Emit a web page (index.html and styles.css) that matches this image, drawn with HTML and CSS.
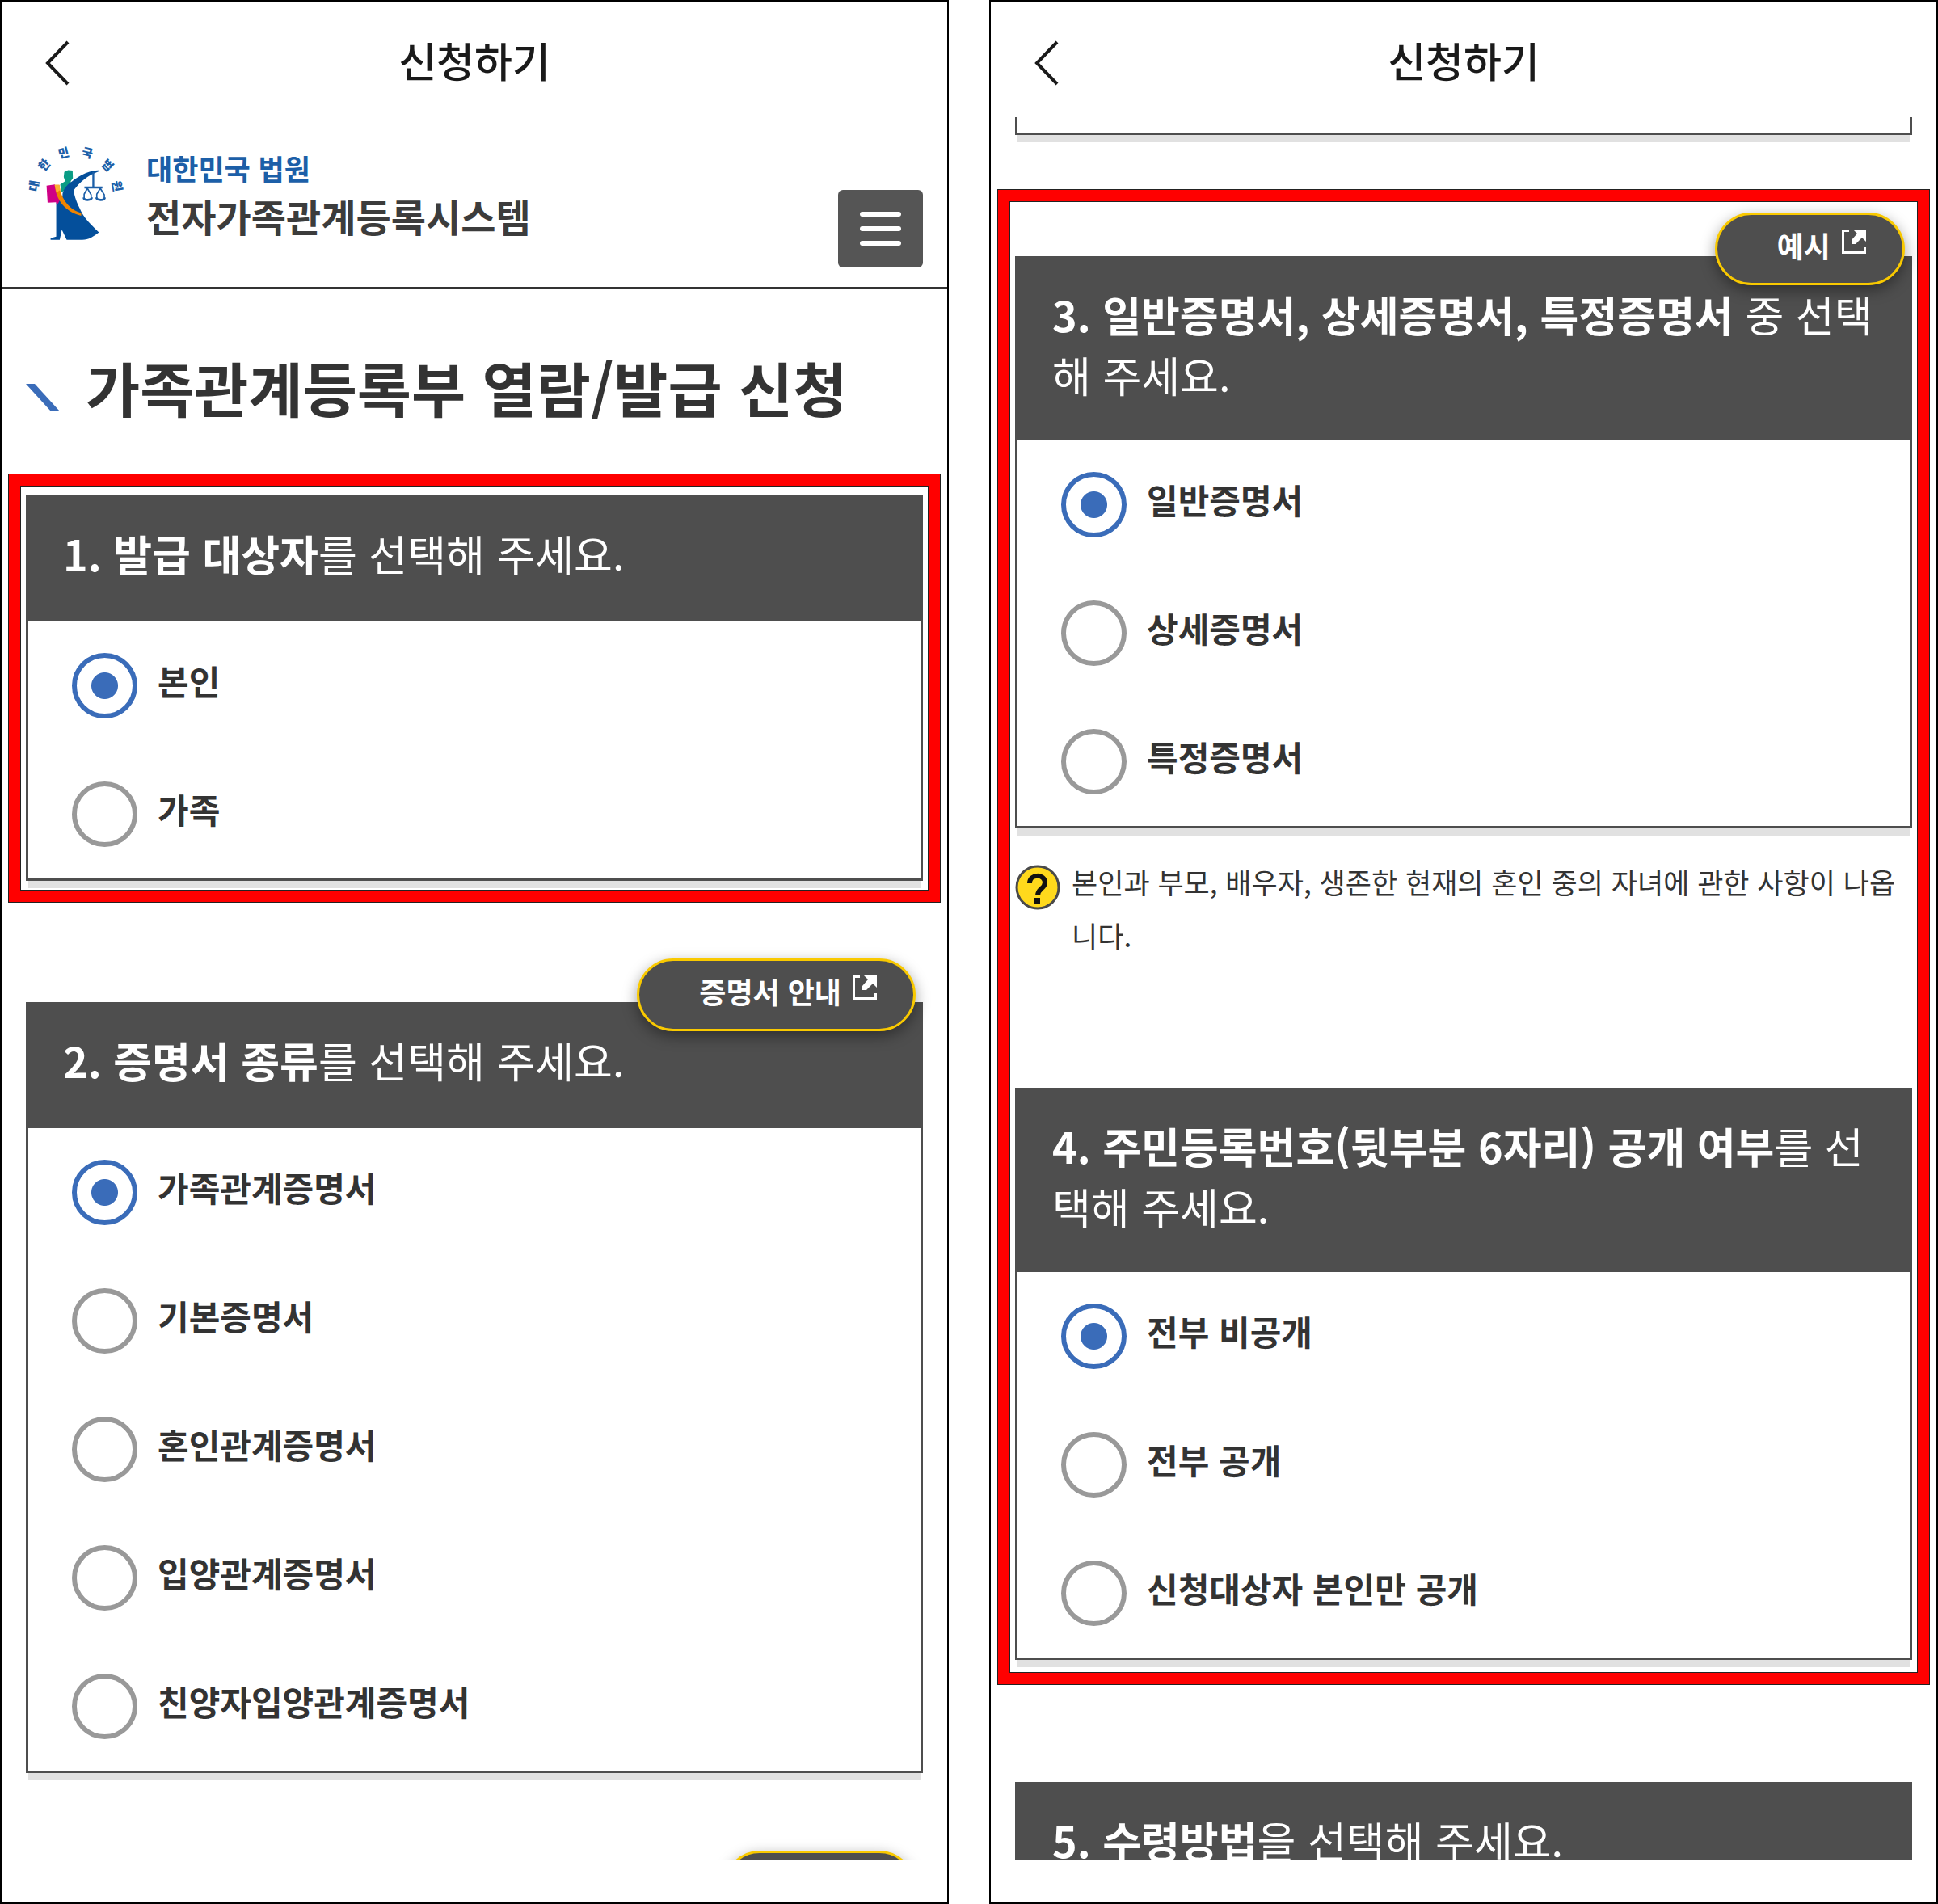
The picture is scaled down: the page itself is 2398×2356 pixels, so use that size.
FILE: index.html
```html
<!DOCTYPE html>
<html lang="ko">

<head>
  <meta charset="UTF-8">
  <meta name="viewport" content="width=device-width, initial-scale=1.0">
  <title>가족관계등록부 열람/발급 신청</title>
  <link rel="stylesheet" href="styles.css">
</head>

<body>

  <svg width="0" height="0" class="defs" aria-hidden="true">
    <symbol id="icon-back" viewBox="0 0 32 56">
      <path d="M30 2 L5 28 L30 54" fill="none" stroke="#1a1a1a" stroke-width="4"/>
    </symbol>
    <symbol id="icon-open" viewBox="0 0 30 30">
      <path d="M9 1.5H1.5V28.5H28.5V22" fill="none" stroke="#fff" stroke-width="3"/>
      <path d="M14 0H30V15L25 10L17 18H12V13L19 5Z" fill="#fff"/>
    </symbol>
  </svg>

  <main class="screens">

    <section class="screen">
      <header class="topbar">
        <button class="back" aria-label="뒤로"><svg><use href="#icon-back"/></svg></button>
        <h1>신청하기</h1>
      </header>

      <div class="content">
        <div class="site-head">
          <a href="#" class="logo">
            <svg class="emblem" viewBox="40 54 370 360">
              <g fill="#1c5fa8" class="emblem-text">
                <text transform="translate(67 206) rotate(-80)">대</text>
                <text transform="translate(106 127) rotate(-50)">한</text>
                <text transform="translate(180 81) rotate(-14)">민</text>
                <text transform="translate(270 81) rotate(14)">국</text>
                <text transform="translate(346 128) rotate(45)">법</text>
                <text transform="translate(383 207) rotate(80)">원</text>
              </g>
              <path d="M183 155L197 148L214 150L215 178L207 190L208 205L172 232L168 202L186 190L181 174Z" fill="#0a9c85"/>
              <path d="M314 149C270 146 226 178 204 196C184 212 174 232 177 246L153 270V396L132 402V408H166L174 370L192 408H250C275 407 290 397 312 380C285 355 254 325 240 290C228 265 218 240 219 222C240 195 268 168 314 152Z" fill="#044f9b"/>
              <path d="M117 206L148 202L166 262L156 278L152 268L121 269Z" fill="#cf0086"/>
              <path d="M147 203H165C168 250 200 296 246 308V318C196 306 154 270 147 203Z" fill="#f08400"/>
              <path d="M147 203H165L168 222L154 232Z" fill="#fbb034"/>
              <g fill="none" stroke="#1c5fa8">
                <path d="M291 155V213M258 213H325" stroke-width="7"/>
                <path d="M269 216L257 238V252M269 216L283 240V252M317 216L304 238V252M317 216L332 240V252" stroke-width="5"/>
                <path d="M255 250C256 262 284 262 286 250M302 250C304 262 333 262 334 250" stroke-width="8"/>
              </g>
            </svg>
            <span class="logo-text">
              <span class="logo-court">대한민국 법원</span>
              <span class="logo-system">전자가족관계등록시스템</span>
            </span>
          </a>
          <button class="menu" aria-label="메뉴">
            <span></span>
            <span></span>
            <span></span>
          </button>
        </div>

        <h2 class="page-title">
          <svg viewBox="0 0 42 34"><path d="M0 0H11L42 34H31Z" fill="#3a6cb9"/></svg>
          가족관계등록부 열람/발급 신청
        </h2>

        <div class="highlight">
          <fieldset class="card">
            <div class="card-title"><p><strong>1. 발급 대상자</strong>를 선택해 주세요.</p></div>
            <div class="options">
              <label class="option"><input type="radio" name="target" checked><span>본인</span></label>
              <label class="option"><input type="radio" name="target"><span>가족</span></label>
            </div>
          </fieldset>
        </div>

        <div class="block block-type">
          <fieldset class="card">
            <button class="pill">증명서 안내<svg><use href="#icon-open"/></svg></button>
            <div class="card-title"><p><strong>2. 증명서 종류</strong>를 선택해 주세요.</p></div>
            <div class="options">
              <label class="option"><input type="radio" name="cert" checked><span>가족관계증명서</span></label>
              <label class="option"><input type="radio" name="cert"><span>기본증명서</span></label>
              <label class="option"><input type="radio" name="cert"><span>혼인관계증명서</span></label>
              <label class="option"><input type="radio" name="cert"><span>입양관계증명서</span></label>
              <label class="option"><input type="radio" name="cert"><span>친양자입양관계증명서</span></label>
            </div>
          </fieldset>
        </div>

        <div class="block block-next">
          <div class="card">
            <button class="pill pill-short" aria-label="예시"></button>
          </div>
        </div>
      </div>
    </section>

    <section class="screen">
      <header class="topbar">
        <button class="back" aria-label="뒤로"><svg><use href="#icon-back"/></svg></button>
        <h1>신청하기</h1>
      </header>

      <div class="content">
        <div class="block">
          <div class="card">
            <div class="options card-end"></div>
          </div>
        </div>

        <div class="highlight highlight-tall">
          <fieldset class="card">
            <button class="pill">예시<svg><use href="#icon-open"/></svg></button>
            <div class="card-title"><p><strong>3. 일반증명서, 상세증명서, 특정증명서</strong> 중 선택해 주세요.</p></div>
            <div class="options">
              <label class="option"><input type="radio" name="kind" checked><span>일반증명서</span></label>
              <label class="option"><input type="radio" name="kind"><span>상세증명서</span></label>
              <label class="option"><input type="radio" name="kind"><span>특정증명서</span></label>
            </div>
          </fieldset>

          <div class="help">
            <svg class="help-icon" viewBox="0 0 57 57">
              <circle cx="28" cy="28" r="26" fill="#ffd91c" stroke="#4a4a4a" stroke-width="3"/>
              <path d="M18 23C18 11 37 11 37 22C37 30 28 29 28 38" fill="none" stroke="#111" stroke-width="6"/>
              <rect x="24" y="41" width="7" height="7" fill="#111"/>
            </svg>
            <p>본인과 부모, 배우자, 생존한 현재의 혼인 중의 자녀에 관한 사항이 나옵니다.</p>
          </div>

          <fieldset class="card">
            <div class="card-title"><p><strong>4. 주민등록번호(뒷부분 6자리) 공개 여부</strong>를 선택해 주세요.</p></div>
            <div class="options">
              <label class="option"><input type="radio" name="open" checked><span>전부 비공개</span></label>
              <label class="option"><input type="radio" name="open"><span>전부 공개</span></label>
              <label class="option"><input type="radio" name="open"><span>신청대상자 본인만 공개</span></label>
            </div>
          </fieldset>
        </div>

        <div class="block block-receive">
          <div class="card">
            <div class="card-title"><p><strong>5. 수령방법</strong>을 선택해 주세요.</p></div>
          </div>
        </div>
      </div>
    </section>

  </main>

</body>

</html>
```

FILE: styles.css
```css
* {
  box-sizing: border-box;
}

body {
  margin: 0;
  background: #fff;
  color: #333;
  font-family: "Noto Sans CJK KR", "Noto Sans", sans-serif;
}

h1, h2, p {
  margin: 0;
}

button {
  font-family: inherit;
  cursor: pointer;
}

.defs {
  position: absolute;
}

.screens {
  display: grid;
  grid-template-columns: 1fr 1fr;
  gap: 50px;
  height: 100vh;
}

.screen {
  display: flex;
  flex-direction: column;
  min-width: 0;
  min-height: 0;
  border: 2px solid #000;
  padding-bottom: 52px;
}

/* top bar */
.topbar {
  display: grid;
  grid-template-columns: 110px 1fr 110px;
  align-items: center;
  flex: none;
  height: 143px;
}

.topbar h1 {
  font-size: 51px;
  font-weight: 500;
  line-height: 72px;
  text-align: center;
  color: #1a1a1a;
}

.back {
  background: none;
  border: none;
  padding: 8px 0 0 52px;
  text-align: left;
}

.back svg {
  display: block;
  width: 32px;
  height: 56px;
}

.content {
  flex: 1;
  min-height: 0;
  overflow: hidden;
}

/* site header */
.site-head {
  display: flex;
  justify-content: space-between;
  align-items: flex-end;
  height: 213px;
  padding: 0 30px 24px;
  border-bottom: 3px solid #333;
}

.logo {
  display: flex;
  gap: 26px;
  padding-bottom: 32px;
  text-decoration: none;
}

.emblem {
  width: 123px;
  height: 120px;
  overflow: visible;
}

.emblem-text {
  font-size: 44px;
  font-weight: 900;
  text-anchor: middle;
  dominant-baseline: central;
}

.logo-text {
  display: flex;
  flex-direction: column;
  padding-top: 2px;
}

.logo-court {
  font-size: 35px;
  font-weight: 700;
  line-height: 54px;
  color: #1c5fa8;
}

.logo-system {
  font-size: 47px;
  font-weight: 700;
  line-height: 64px;
  color: #3c3c3c;
}

.menu {
  display: flex;
  flex-direction: column;
  justify-content: center;
  align-items: center;
  gap: 12px;
  width: 105px;
  height: 96px;
  background: #555;
  border: none;
  border-radius: 6px;
}

.menu span {
  width: 51px;
  height: 6px;
  border-radius: 3px;
  background: #fff;
}

.page-title {
  display: flex;
  align-items: center;
  gap: 32px;
  height: 228px;
  padding: 12px 30px 0;
  font-size: 73px;
  font-weight: 700;
  white-space: nowrap;
}

.page-title svg {
  flex: none;
  width: 42px;
  height: 34px;
  margin-top: 28px;
}

/* red frame around the steps */
.highlight {
  margin: 0 8px;
  padding: 12px 7px;
  border: 15px solid #f00;
  outline: 1px solid #222;
  outline-offset: -1px;
  box-shadow: inset 0 0 0 1px #222;
}

.highlight-tall {
  margin-top: 67px;
  padding: 68px 7px 16px;
}

.block {
  padding: 0 30px;
}

.block-type {
  margin-top: 123px;
}

.block-next {
  margin-top: 150px;
}

.block-receive {
  margin-top: 120px;
}

.card {
  position: relative;
  min-width: 0;
  margin: 0;
  padding: 0;
  border: none;
}

.card-title {
  min-height: 156px;
  padding: 34px 46px 44px;
  background: #4e4e4e;
  color: #fff;
  font-size: 52px;
  font-weight: 400;
  line-height: 75px;
}

.card-title strong {
  font-weight: 700;
}

.options {
  border: 3px solid #4e4e4e;
  border-top: none;
  box-shadow: 0 12px 0 -3px #e1e1e1;
}

.card-end {
  height: 22px;
}

.option {
  display: flex;
  align-items: center;
  gap: 25px;
  height: 159px;
  padding-left: 54px;
  cursor: pointer;
}

.option span {
  padding-bottom: 14px;
  font-size: 42px;
  font-weight: 700;
}

.option input {
  appearance: none;
  flex: none;
  width: 81px;
  height: 81px;
  margin: 0;
  border: 6px solid #999;
  border-radius: 50%;
  background: #fff;
}

.option input:checked {
  border-color: #3a6cb9;
  background: radial-gradient(circle, #3a6cb9 16px, #fff 17px);
}

.pill {
  position: absolute;
  top: -54px;
  right: 9px;
  display: flex;
  align-items: center;
  gap: 14px;
  height: 90px;
  padding: 0 45px 10px 74px;
  border: 3px solid #f9c900;
  border-radius: 45px;
  background: #4e4e4e;
  box-shadow: 0 6px 18px rgba(0, 0, 0, 0.4);
  color: #fff;
  font-size: 36px;
  font-weight: 700;
  white-space: nowrap;
}

.pill svg {
  width: 30px;
  height: 30px;
  margin-bottom: 8px;
}

.pill-short {
  width: 238px;
}

.help {
  display: flex;
  align-items: flex-start;
  gap: 13px;
  min-height: 321px;
  padding-top: 45px;
}

.help-icon {
  flex: none;
  width: 57px;
  height: 57px;
}

.help p {
  margin-top: -12px;
  font-size: 35px;
  font-weight: 400;
  line-height: 66px;
}
```
